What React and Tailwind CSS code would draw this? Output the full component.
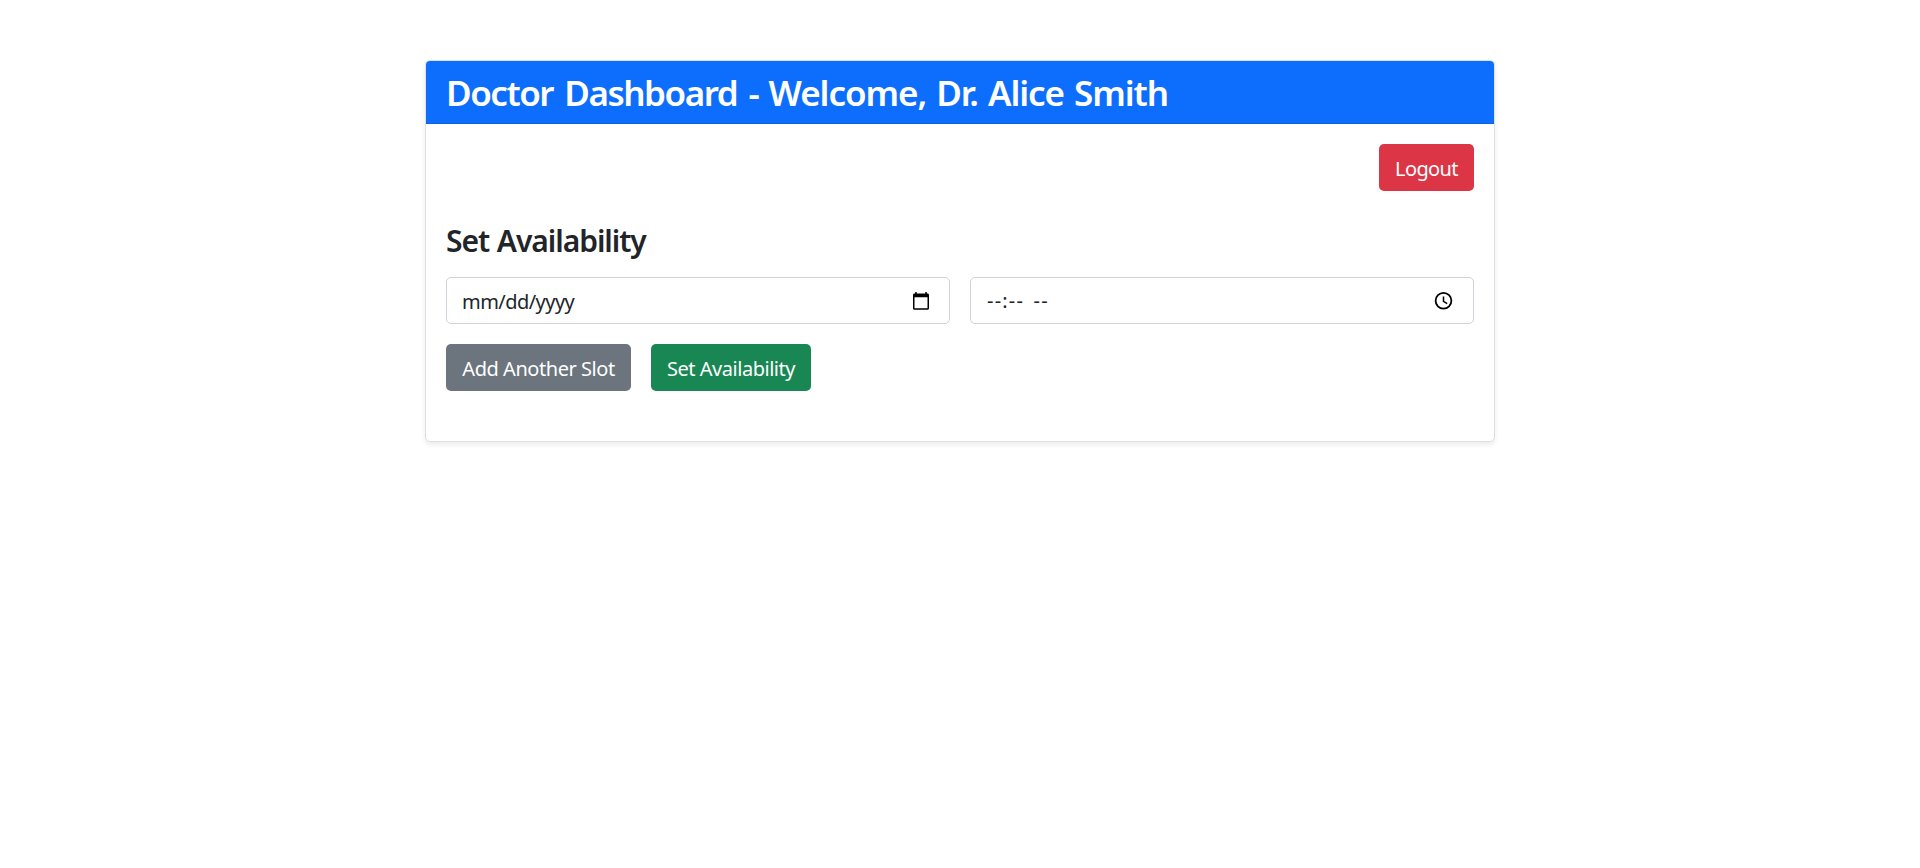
const font = "font-['Noto_Sans',sans-serif]";

function CalendarIcon() {
  return (
    <svg width="20" height="20" viewBox="0 0 20 20" fill="#000" className="relative left-px" aria-hidden="true">
      <path fillRule="evenodd" d="M4.2 1h1.5v1.5h8.6V1h1.5v1.5h.7c.9 0 1.5.6 1.5 1.5v13.2c0 .9-.6 1.5-1.5 1.5h-13c-.9 0-1.5-.6-1.5-1.5V4c0-.9.6-1.5 1.5-1.5h.7zM3.5 6.2v11h13v-11z" />
    </svg>
  );
}

function ClockIcon() {
  return (
    <svg width="20" height="20" viewBox="0 0 20 20" fill="none" stroke="#000" aria-hidden="true">
      <circle cx="9.5" cy="9.8" r="7.9" strokeWidth="1.8" />
      <path d="M9.5 5.6v4.7l3.7 2.3" strokeWidth="1.5" />
    </svg>
  );
}

function Button({ className, children }) {
  return (
    <button type="button" className={`h-[47px] rounded-[5px] pt-[2px] text-center text-[20px] leading-[30px] whitespace-nowrap text-white ${className}`}>
      {children}
    </button>
  );
}

function Field({ children, icon }) {
  return (
    <div className="flex h-[47px] flex-1 items-center justify-between rounded-[5px] border border-[#ced4da] bg-white pr-[19px] pl-[15px] text-[20px] leading-[30px] text-[#212529]">
      {children}
      {icon}
    </div>
  );
}

export default function App() {
  return (
    <main className={`min-h-screen bg-white pt-[60px] ${font}`}>
      <section className="mx-auto h-[382px] w-[1070px] rounded-[5px] border border-[#dfdfdf] bg-white shadow-[0_2.5px_5px_rgba(0,0,0,0.075)]">
        <header className="h-[63px] rounded-t-[4px] border-b border-[#0b60df] bg-[#0d6efd] pt-[11px] pl-[20px]">
          <h1 className="text-[35px] leading-[42px] font-semibold whitespace-nowrap text-white">
            <span className="tracking-[-1.45px] [word-spacing:3.5px]">Doctor Dashboard </span>
            <span className="tracking-[-1.06px] [word-spacing:2px]">- Welcome, Dr. Alice Smith</span>
          </h1>
        </header>
        <div className="px-[20px] pt-[20px]">
          <div className="flex justify-end">
            <Button className="w-[95px] bg-[#dc3545]"><span className="tracking-[-0.6px]">Logout</span></Button>
          </div>
          <h2 className="mt-[32px] h-[54px] text-[30px] leading-[36px] font-semibold text-[#212529]"><span className="tracking-[-1.05px] [word-spacing:1px]">Set Availability</span></h2>
          <div className="flex gap-5">
            <Field icon={<CalendarIcon />}><span className="pt-[3px] tracking-[-0.55px]">mm/dd/yyyy</span></Field>
            <Field icon={<ClockIcon />}><span className="pt-[1px] pl-px tracking-[1.2px] [word-spacing:3px]">--:-- --</span></Field>
          </div>
          <div className="mt-5 flex gap-5">
            <Button className="w-[185px] bg-[#6c757d]"><span className="tracking-[-0.45px]">Add Another Slot</span></Button>
            <Button className="w-[160px] bg-[#198754]"><span className="tracking-[-0.47px]">Set Availability</span></Button>
          </div>
        </div>
      </section>
    </main>
  );
}
